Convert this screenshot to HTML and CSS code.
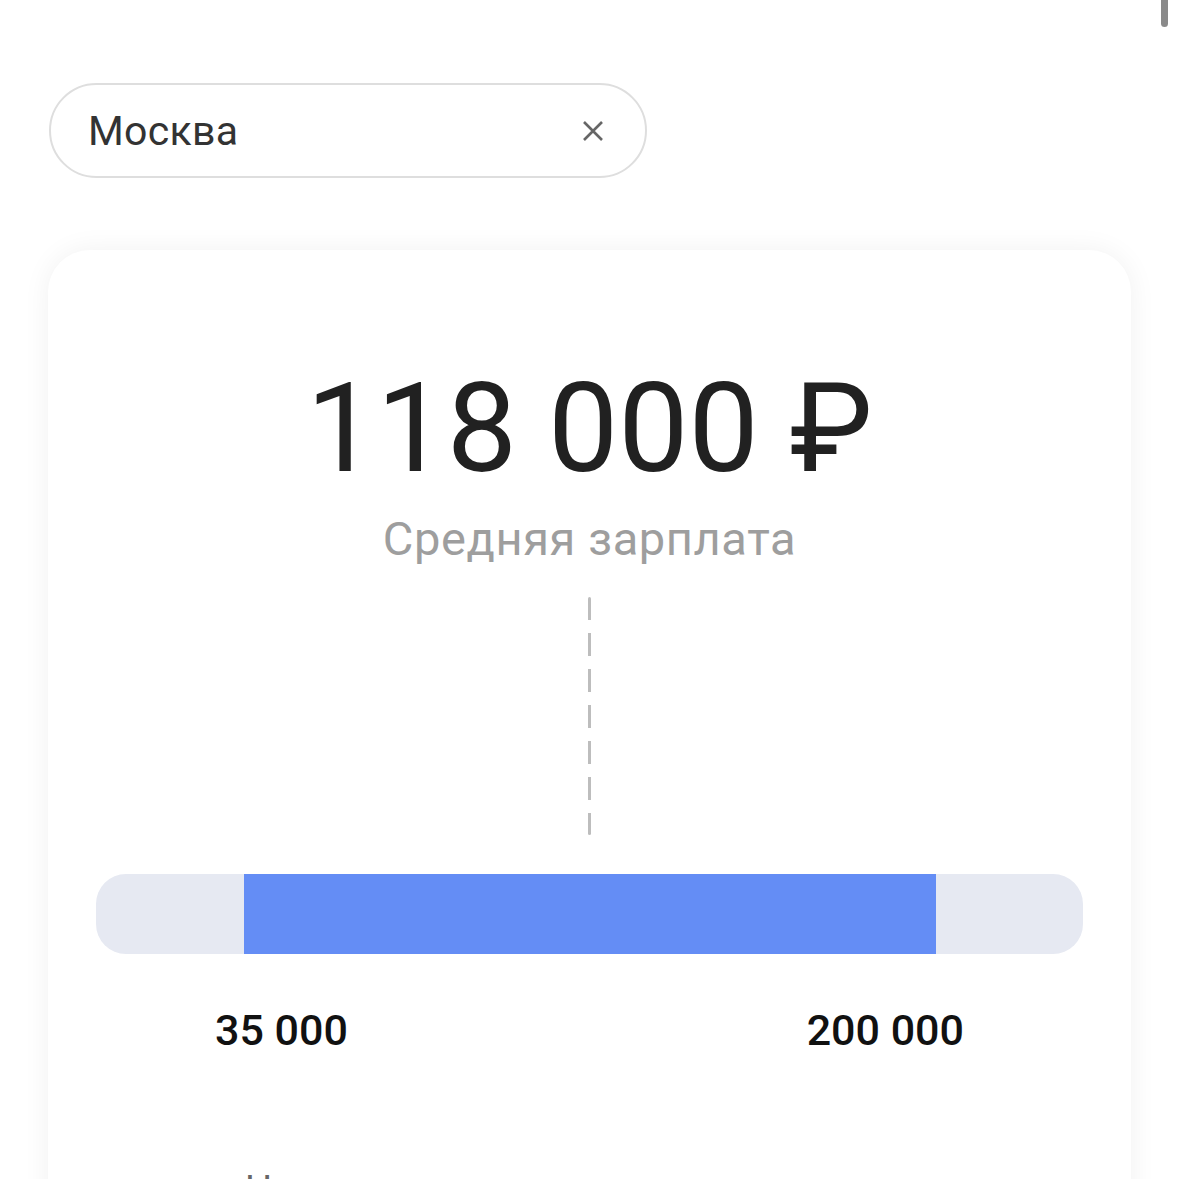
FILE: index.html
```html
<!DOCTYPE html>
<html lang="ru">
<head>
<meta charset="utf-8">
<link rel="stylesheet" href="styles.css">
</head>
<body>
<div class="scrollbar"></div>
<main class="page">
  <div class="search">
    <span class="search-text">Москва</span>
    <svg class="clear" width="22" height="22" viewBox="0 0 22 22"><path d="M2 2L20 20M20 2L2 20" stroke="#666" stroke-width="2.6" stroke-linecap="butt"/></svg>
  </div>
  <section class="card">
    <div class="amount">118&nbsp;000 ₽</div>
    <div class="caption">Средняя зарплата</div>
    <div class="marker"></div>
    <div class="range">
      <div class="range-fill" style="margin-left:15.0%;width:70.1%"></div>
    </div>
    <div class="labels">
      <span>35&nbsp;000</span>
      <span>200&nbsp;000</span>
    </div>
    <p class="note">Начинающие специалисты</p>
  </section>
</main>
</body>
</html>
```
FILE: styles.css
```css
html, body {
  margin: 0;
  padding: 0;
  background: #ffffff;
  font-family: Roboto, "Noto Sans", sans-serif;
  overflow: hidden;
  height: 1179px;
}
.scrollbar {
  position: absolute;
  top: -10px;
  left: 1161px;
  width: 7px;
  height: 37px;
  border-radius: 4px;
  background: #8a8a8a;
}
.page {
  padding: 83px 48px 0 48px;
}
.search {
  box-sizing: border-box;
  width: 598px;
  height: 95px;
  margin-left: 1px;
  border: 2px solid #dedede;
  border-radius: 48px;
  display: flex;
  align-items: center;
  justify-content: space-between;
  padding: 0 41px 0 37px;
}
.search-text {
  font-size: 41px;
  color: #333333;
  letter-spacing: 0.3px;
}
.clear {
  display: block;
}
.card {
  margin-top: 72px;
  width: 1083px;
  box-sizing: border-box;
  background: #ffffff;
  border-radius: 42px;
  box-shadow: 0 0 28px rgba(0, 0, 0, 0.06);
  padding: 116px 48px 40px 48px;
  display: flex;
  flex-direction: column;
  align-items: center;
}
.amount {
  font-size: 125px;
  line-height: 125px;
  color: #212121;
  letter-spacing: 0;
}
.caption {
  margin-top: 21px;
  font-size: 47px;
  line-height: 54px;
  color: #9e9e9e;
  letter-spacing: 0.6px;
}
.marker {
  margin-top: 31px;
  width: 3px;
  height: 238px;
  background: repeating-linear-gradient(to bottom, #bdbdbd 0, #bdbdbd 23px, transparent 23px, transparent 36px);
  border-radius: 2px;
}
.range {
  margin-top: 39px;
  align-self: stretch;
  height: 80px;
  border-radius: 30px;
  background: #e6e9f2;
  display: flex;
  overflow: hidden;
}
.range-fill {
  background: #648df5;
  height: 100%;
}
.labels {
  align-self: stretch;
  display: flex;
  justify-content: space-between;
  padding: 0 119px;
  margin-top: 51px;
  font-size: 43px;
  line-height: 50px;
  font-weight: 500;
  color: #111111;
}
.note {
  align-self: flex-start;
  margin: 113px 0 0 149px;
  font-size: 38px;
  line-height: 44px;
  color: #666666;
}
```
